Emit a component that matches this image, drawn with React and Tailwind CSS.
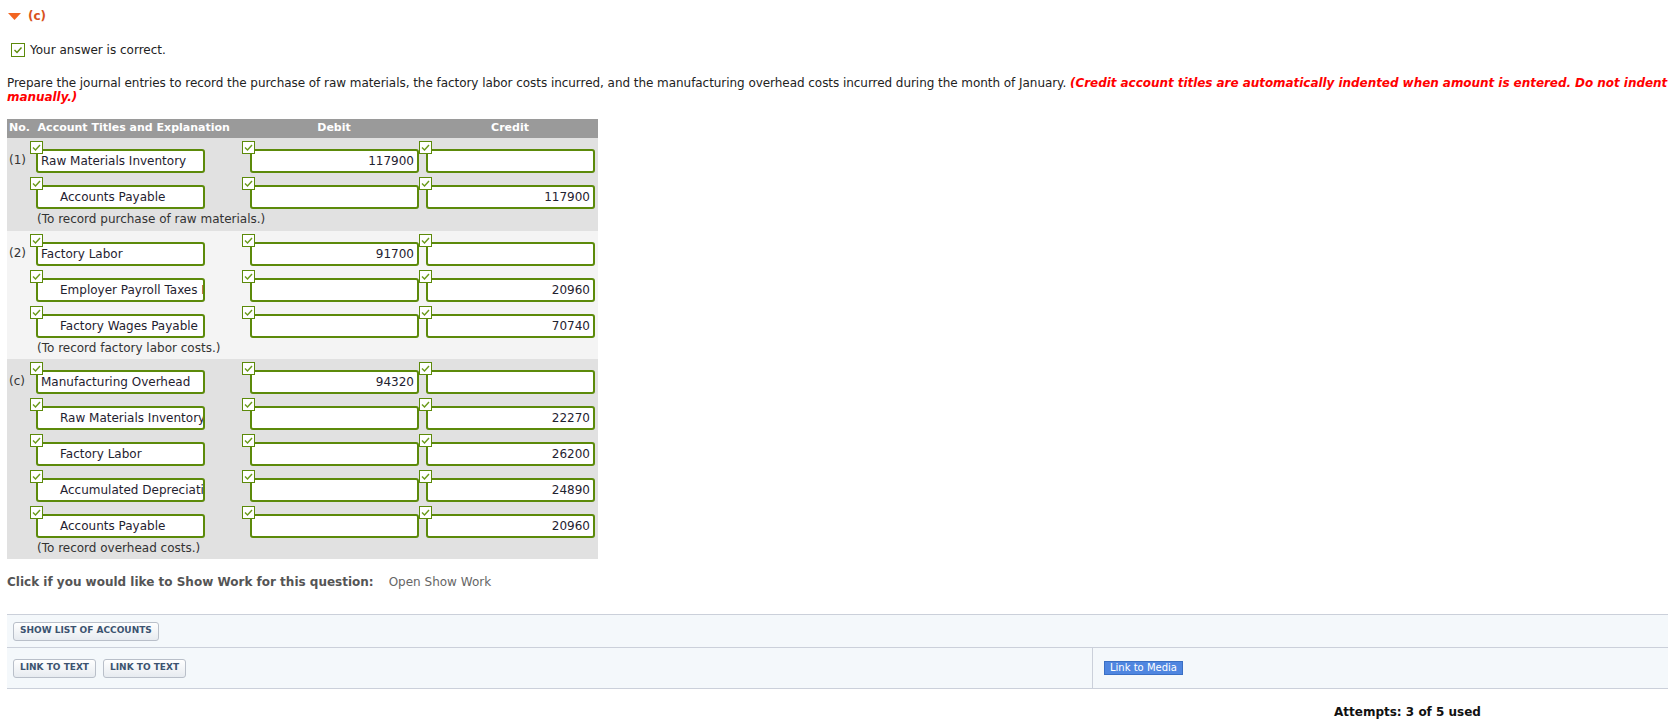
import React from 'react';

const sections = [
  {
    no: '(1)',
    bg: 'bg-[#e1e1e1]',
    note: 'h-[18px]',
    rows: [
      { account: 'Raw Materials Inventory', debit: '117900', credit: '' },
      { account: 'Accounts Payable', debit: '', credit: '117900', indent: true },
    ],
    text: '(To record purchase of raw materials.)',
  },
  {
    no: '(2)',
    bg: 'bg-[#f4f4f4]',
    note: 'h-[17px]',
    rows: [
      { account: 'Factory Labor', debit: '91700', credit: '' },
      { account: 'Employer Payroll Taxes Payable', debit: '', credit: '20960', indent: true },
      { account: 'Factory Wages Payable', debit: '', credit: '70740', indent: true },
    ],
    text: '(To record factory labor costs.)',
  },
  {
    no: '(c)',
    bg: 'bg-[#e1e1e1]',
    note: 'h-[17px]',
    rows: [
      { account: 'Manufacturing Overhead', debit: '94320', credit: '' },
      { account: 'Raw Materials Inventory', debit: '', credit: '22270', indent: true },
      { account: 'Factory Labor', debit: '', credit: '26200', indent: true },
      { account: 'Accumulated Depreciation', debit: '', credit: '24890', indent: true },
      { account: 'Accounts Payable', debit: '', credit: '20960', indent: true },
    ],
    text: '(To record overhead costs.)',
  },
];

// small green check marker that sits on the input corner
const Check = () => (
  <span className="absolute left-0 top-0 z-10 flex h-[13px] w-[13px] items-center justify-center border border-[#5c8a0a] bg-white">
    <svg width="9" height="7" viewBox="0 0 9 7">
      <path d="M1 3.5 L3.5 6 L8 1" fill="none" stroke="#6a9a1a" strokeWidth="1.4" />
    </svg>
  </span>
);

const Field = ({ value, box, offset, align = 'left', indent }) => (
  <div className={`relative h-[36px] shrink-0 ${box}`}>
    <Check />
    <div
      className={`${offset} mt-[8px] flex h-[24px] w-[169px] items-center overflow-hidden whitespace-nowrap rounded-[3px] border-2 border-[#5c8a0a] bg-white text-[#1f2230] ${
        align === 'right' ? 'justify-end pr-[3px]' : indent ? 'pl-[22px]' : 'pl-[3px]'
      }`}
    >
      {value}
    </div>
  </div>
);

const GreyBtn = ({ children }) => (
  <button className="h-[19px] rounded-[3px] border border-[#b9bfc9] bg-gradient-to-b from-white to-[#e7ebf0] px-[6px] text-[9px] font-bold text-[#3c5370]">
    {children}
  </button>
);

export default function App() {
  return (
    <div className="min-h-[720px] bg-white pb-6 text-[12px] text-[#222] [font-family:'DejaVu_Sans',Verdana,sans-serif]">
      <div className="flex items-center gap-[7px] pl-[8px] pt-[7px]">
        <svg width="13" height="7" viewBox="0 0 13 7">
          <path d="M0 0 H13 L6.5 7 Z" fill="#f26522" />
        </svg>
        <span className="font-bold text-[#d9531e]">(c)</span>
      </div>

      <div className="mt-[16px] flex items-center gap-[5px] pl-[11px]">
        <span className="flex h-[14px] w-[14px] items-center justify-center border border-[#5c8a0a] bg-white">
          <svg width="10" height="8" viewBox="0 0 10 8">
            <path d="M1.5 4 L4 6.5 L8.5 1.5" fill="none" stroke="#5c8a0a" strokeWidth="1.4" />
          </svg>
        </span>
        <span>Your answer is correct.</span>
      </div>

      <p className="mt-[17px] pl-[7px] leading-[14px] tracking-[-0.05px]">
        Prepare the journal entries to record the purchase of raw materials, the factory labor costs incurred, and the manufacturing overhead costs incurred during the month of January.{' '}
        <span className="font-bold italic text-[#ff0000]">
          (Credit account titles are automatically indented when amount is entered. Do not indent manually.)
        </span>
      </p>

      <div className="ml-[7px] mt-[15px] w-[591px]">
        <div className="flex h-[19px] items-center whitespace-nowrap bg-[#9a9a9a] text-[11px] font-bold text-white">
          <span className="w-[243px] shrink-0 pl-[2px]">No.&nbsp;&nbsp;Account Titles and Explanation</span>
          <span className="w-[168px] shrink-0 text-center">Debit</span>
          <span className="ml-[8px] w-[168px] shrink-0 text-center">Credit</span>
        </div>
        {sections.map((s) => (
          <div key={s.no} className={`${s.bg} pt-[3px]`}>
            {s.rows.map((r, i) => (
              <div key={i} className="flex">
                <div className="w-[23px] shrink-0 pl-[2px] pt-[10px] text-[#333]">{i === 0 ? s.no : ''}</div>
                <Field value={r.account} box="w-[175px]" offset="ml-[6px]" indent={r.indent} />
                <div className="w-[37px] shrink-0" />
                <Field value={r.debit} box="w-[177px]" offset="ml-[8px]" align="right" />
                <Field value={r.credit} box="w-[179px]" offset="ml-[7px]" align="right" />
              </div>
            ))}
            <div className={`${s.note} pl-[30px] leading-[12px] text-[#333]`}>{s.text}</div>
          </div>
        ))}
      </div>

      <div className="mt-[14px] flex gap-[15px] pl-[7px] text-[#555]">
        <span className="font-bold">Click if you would like to Show Work for this question:</span>
        <span className="text-[#666]">Open Show Work</span>
      </div>

      <div className="ml-[7px] mt-[23px] border-y border-[#cbd0da] bg-[#f4f8fb]">
        <div className="flex h-[33px] items-center border-b border-[#cbd0da] pl-[6px]">
          <GreyBtn>SHOW LIST OF ACCOUNTS</GreyBtn>
        </div>
        <div className="flex h-[40px]">
          <div className="flex w-[1086px] items-center gap-[7px] border-r border-[#cbd0da] pl-[6px]">
            <GreyBtn>LINK TO TEXT</GreyBtn>
            <GreyBtn>LINK TO TEXT</GreyBtn>
          </div>
          <div className="flex items-center pl-[11px]">
            <button className="h-[14px] border border-[#3a6fc4] bg-[#4f86e0] px-[5px] text-[10px] leading-[12px] text-white">
              Link to Media
            </button>
          </div>
        </div>
      </div>

      <div className="mt-[14px] pl-[1334px] font-bold text-[#111]">Attempts: 3 of 5 used</div>
    </div>
  );
}
